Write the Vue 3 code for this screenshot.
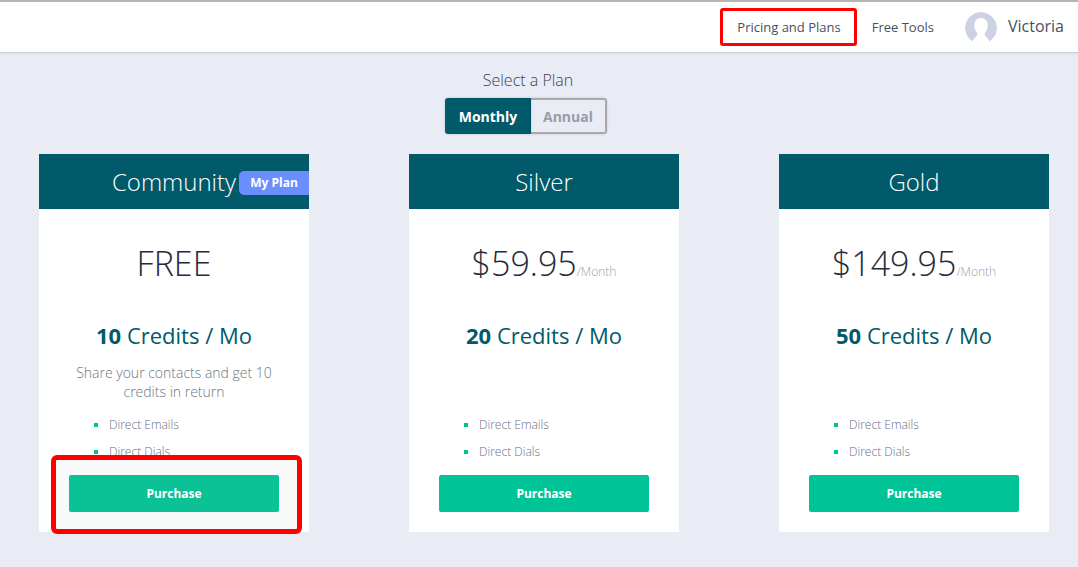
<script setup>
const plans = [
  { name: "Community", price: "FREE", credits: 10, mine: true, note: "Share your contacts and get 10 credits in return" },
  { name: "Silver", price: "$59.95", per: "/Month", credits: 20 },
  { name: "Gold", price: "$149.95", per: "/Month", credits: 50 },
];
</script>

<template>
  <div class="page">
    <header class="topbar">
      <a class="nav-link pricing">Pricing and Plans</a>
      <a class="nav-link tools">Free Tools</a>
      <svg class="avatar" viewBox="0 0 32 32" width="32" height="32">
        <circle cx="16" cy="16" r="16" fill="#ccd2e3" />
        <path d="M16 6c-4 0-6.800 3-6.800 7.400 0 3.100 1.300 5.500 2.700 7 .8 .9 .7 2 0 3L8 28v4h16v-4l-3.900-4.600c-.7-1-.8-2.100 0-3 1.400-1.500 2.700-3.900 2.700-7C22.800 9 20 6 16 6z" fill="#fff" />
      </svg>
      <span class="username">Victoria</span>
    </header>

    <div class="select-title">Select a Plan</div>
    <div class="toggle">
      <div class="toggle-btn active">Monthly</div>
      <div class="toggle-btn">Annual</div>
    </div>

    <div class="plans">
      <section v-for="plan in plans" :key="plan.name" class="card">
        <div class="card-head">
          {{ plan.name }}
          <span v-if="plan.mine" class="badge">My Plan</span>
        </div>
        <div class="card-body">
          <div class="price">{{ plan.price }}<span v-if="plan.per" class="per">{{ plan.per }}</span></div>
          <div class="credits"><b>{{ plan.credits }}</b> Credits / Mo</div>
          <p class="note">{{ plan.note }}</p>
          <ul class="features">
            <li>Direct Emails</li>
            <li>Direct Dials</li>
          </ul>
          <div class="actions" :class="{ marked: plan.mine }">
            <button class="purchase">Purchase</button>
          </div>
        </div>
      </section>
    </div>
  </div>
</template>

<style>
html,
body {
  margin: 0;
  overflow: hidden;
}
</style>

<style scoped>
.page {
  width: 1078px;
  height: 567px;
  overflow: hidden;
  background: #e9ebf5;
  font-family: "Open Sans", "Noto Sans", sans-serif;
  color: #262b3a;
}

.topbar {
  box-sizing: border-box;
  height: 53px;
  background: #fff;
  border-top: 2px solid #b5b5b5;
  border-bottom: 1px solid #cfd0d6;
  box-shadow: 0 1px 2px rgba(0, 0, 0, 0.06);
  display: flex;
  align-items: center;
  justify-content: flex-end;
  padding-right: 14px;
  position: relative;
}

.nav-link {
  font-size: 13px;
  color: #47505f;
}

.pricing {
  position: relative;
  margin-right: 31px;
}

.pricing::after {
  content: "";
  position: absolute;
  left: -17px;
  right: -16px;
  top: -10px;
  bottom: -10px;
  border: 3px solid #f00;
  border-radius: 3px;
}

.tools {
  margin-right: 31px;
}

.avatar {
  margin-right: 11px;
  margin-top: 2px;
  border-radius: 50%;
}

.username {
  font-size: 16px;
  color: #47505f;
  margin-bottom: 2px;
}

.select-title {
  text-align: center;
  font-size: 16px;
  font-weight: 300;
  line-height: 22px;
  margin-top: 16px;
  padding-right: 22px;
  color: #3c4254;
}

.toggle {
  display: flex;
  justify-content: center;
  margin-top: 7px;
  padding-right: 26px;
  height: 36px;
}

.toggle-btn {
  box-sizing: border-box;
  width: 76px;
  display: flex;
  align-items: center;
  justify-content: center;
  font-size: 14px;
  font-weight: 700;
  color: #9a9ca8;
  border: 2px solid #a9a9ad;
  border-left: none;
  border-radius: 0 3px 3px 0;
  box-shadow: 0 0 3px rgba(0, 0, 0, 0.15);
}

.toggle-btn.active {
  width: 86px;
  color: #fff;
  background: #005a6a;
  border: none;
  border-radius: 3px 0 0 3px;
}

.plans {
  display: flex;
  gap: 100px;
  padding-left: 39px;
  margin-top: 20px;
}

.card {
  width: 270px;
  height: 378px;
  background: #fff;
  display: flex;
  flex-direction: column;
}

.card-head {
  height: 55px;
  background: #005a6a;
  color: #fff;
  font-size: 24px;
  font-weight: 300;
  line-height: 56px;
  text-align: center;
  position: relative;
}

.badge {
  position: absolute;
  right: 0;
  top: 17px;
  width: 70px;
  height: 24px;
  background: #6b8eff;
  border-radius: 5px 0 0 5px;
  font-size: 12px;
  font-weight: 700;
  line-height: 24px;
}

.card-body {
  flex: 1;
  position: relative;
  text-align: center;
}

.price {
  margin-top: 29px;
  height: 50px;
  font-size: 34px;
  font-weight: 300;
  line-height: 50px;
}

.per {
  font-size: 12px;
  color: #9a9eab;
}

.credits {
  margin-top: 33px;
  font-size: 22px;
  line-height: 28px;
  color: #005a6a;
}

.note {
  margin: 14px auto 0;
  width: 215px;
  height: 38px;
  font-size: 14px;
  font-weight: 300;
  line-height: 19px;
  color: #6d7680;
}

.features {
  list-style: none;
  margin: 10px 0 0;
  padding: 0 0 0 70px;
  text-align: left;
  font-size: 12px;
  font-weight: 300;
  line-height: 27px;
  color: #67727f;
}

.features li {
  position: relative;
}

.features li::before {
  content: "";
  position: absolute;
  left: -15px;
  top: 12px;
  width: 4px;
  height: 4px;
  background: #00c495;
}

.actions {
  position: absolute;
  left: 30px;
  bottom: 20px;
  width: 210px;
}

.actions.marked::before {
  content: "";
  position: absolute;
  left: -18px;
  right: -23px;
  top: -20px;
  bottom: -22px;
  box-sizing: border-box;
  background: #f8f9f9;
  border: 5px solid #f00;
  border-radius: 6px;
}

.purchase {
  position: relative;
  display: block;
  width: 100%;
  height: 37px;
  border: none;
  border-radius: 2px;
  background: #00c497;
  color: #fff;
  font-family: inherit;
  font-size: 12px;
  font-weight: 700;
}

.marked .purchase {
  background: #0ac295;
}
</style>
